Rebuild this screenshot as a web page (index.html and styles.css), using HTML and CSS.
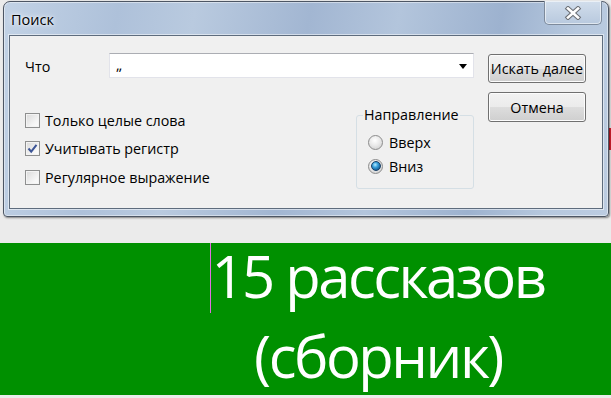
FILE: index.html
```html
<!DOCTYPE html>
<html lang="ru">
<head>
    <meta charset="UTF-8">
    <meta name="viewport" content="width=device-width, initial-scale=1.0">
    <title>Поиск</title>
    <link rel="stylesheet" href="styles.css">
</head>
<body>
    <div class="page">
        <div class="red-mark"></div>

        <div class="window">
            <div class="titlebar">
                <span class="title">Поиск</span>
                <div class="close">
                    <svg width="18" height="14" viewBox="0 0 18 14">
                        <path d="M4 2.5 L14 11.5 M14 2.5 L4 11.5" stroke="#6b6f75" stroke-width="4.6" stroke-linecap="square"/>
                        <path d="M4 2.5 L14 11.5 M14 2.5 L4 11.5" stroke="#ffffff" stroke-width="2.6" stroke-linecap="square"/>
                    </svg>
                </div>
            </div>

            <div class="client">
                <div class="main">
                    <div class="find-row">
                        <span class="find-label">Что</span>
                        <div class="combo">
                            <span class="combo-text">„</span>
                            <span class="combo-arrow"></span>
                        </div>
                    </div>

                    <div class="options">
                        <div class="checks">
                            <div class="check"><span class="box"></span>Только целые слова</div>
                            <div class="check"><span class="box checked">
                                <svg width="13" height="13" viewBox="0 0 13 13"><path d="M2.5 6.5 L5.2 9.6 L10.5 2.8" fill="none" stroke="#3d5596" stroke-width="2"/></svg>
                            </span>Учитывать регистр</div>
                            <div class="check"><span class="box"></span>Регулярное выражение</div>
                        </div>

                        <fieldset class="direction">
                            <legend>Направление</legend>
                            <div class="radios">
                                <div class="radio"><span class="dot"></span>Вверх</div>
                                <div class="radio"><span class="dot selected"></span>Вниз</div>
                            </div>
                        </fieldset>
                    </div>
                </div>

                <div class="buttons">
                    <div class="btn">Искать далее</div>
                    <div class="btn">Отмена</div>
                </div>
            </div>
        </div>

        <div class="banner">
            <div class="caret"></div>
            <div class="banner-text">15 рассказов<br>(сборник)</div>
        </div>
    </div>
</body>
</html>
```

FILE: styles.css
```css
* {
    box-sizing: border-box;
    margin: 0;
    padding: 0;
}

body {
    background-color: #ebebeb;
    font-family: 'Open Sans', 'Noto Sans', sans-serif;
    font-size: 14.3px;
    color: #000;
    overflow: hidden;
}

.page {
    position: relative;
    width: 611px;
    height: 398px;
    padding-top: 1px;
}

.red-mark {
    position: absolute;
    left: 606px;
    top: 128px;
    width: 5px;
    height: 22px;
    background-color: #d4202e;
}

/* window frame */
.window {
    position: relative;
    width: 606px;
    height: 216px;
    margin-left: 3px;
    padding: 0 5px 7px 5px;
    border: 1px solid #4d5664;
    border-radius: 7px 7px 4px 4px;
    background: linear-gradient(100deg, #c2d2e5 0%, #aec1da 18%, #b9cadf 30%, #a2b6d2 48%, #b3c5dc 62%, #9db2cf 78%, #b6c8de 90%, #bccce1 100%);
    box-shadow: 1px 1px 2px rgba(0, 0, 0, 0.45), inset 0 0 0 1px rgba(255, 255, 255, 0.45);
}

.titlebar {
    display: flex;
    justify-content: space-between;
    align-items: flex-start;
    height: 33px;
    margin: 0 -5px;
}

.title {
    padding: 9px 0 0 7px;
    line-height: 18px;
    font-size: 14.5px;
    text-shadow: 0 0 6px rgba(255, 255, 255, 0.95), 0 0 3px rgba(255, 255, 255, 0.9);
}

.close {
    display: flex;
    align-items: center;
    justify-content: center;
    width: 58px;
    height: 24px;
    margin: -1px 6px 0 0;
    border: 1px solid #7d8a9b;
    border-top: none;
    border-radius: 0 0 5px 5px;
    background: linear-gradient(#d2deec, #b8c9de);
    box-shadow: inset 0 0 0 1px rgba(255, 255, 255, 0.55);
}

/* dialog area */
.client {
    display: flex;
    height: 174px;
    padding: 17px 0 0 15px;
    border: 1px solid #5e6c7d;
    background-color: #f0f0f0;
    box-shadow: 0 0 0 1px rgba(255, 255, 255, 0.5);
}

.main {
    width: 449px;
}

.find-row {
    display: flex;
    align-items: center;
    height: 25px;
}

.find-label {
    width: 84px;
    padding-top: 2px;
}

.combo {
    position: relative;
    width: 365px;
    height: 25px;
    border: 1px solid #e2e3ea;
    border-top-color: #abadb3;
    background-color: #fff;
}

.combo-text {
    position: absolute;
    left: 6px;
    top: -2px;
    font-size: 15px;
    line-height: 24px;
}

.combo-arrow {
    position: absolute;
    right: 6px;
    top: 10px;
    border-left: 4px solid transparent;
    border-right: 4px solid transparent;
    border-top: 5px solid #000;
}

.options {
    display: flex;
    margin-top: 28px;
}

.checks {
    width: 331px;
}

.check {
    display: flex;
    align-items: center;
    height: 28.5px;
}

.box {
    display: flex;
    align-items: center;
    justify-content: center;
    width: 15px;
    height: 15px;
    margin-right: 5px;
    border: 1px solid #8e8f8f;
    background: linear-gradient(135deg, #d9d9d9, #f6f6f6 70%, #fbfbfb);
    box-shadow: inset 0 0 0 1px #f3f3f3;
}

.direction {
    width: 118px;
    height: 82px;
    margin-top: 1px;
    padding: 0;
    border: 1px solid #d5dfe5;
    border-radius: 3px;
}

.direction legend {
    margin-left: 6px;
    padding: 0 1px;
    line-height: 16px;
}

.radios {
    padding: 7px 0 0 11px;
}

.radio {
    display: flex;
    align-items: center;
    height: 24px;
}

.dot {
    display: flex;
    align-items: center;
    justify-content: center;
    width: 15px;
    height: 15px;
    margin-right: 6px;
    border: 1px solid #8c8c8c;
    border-radius: 50%;
    background: radial-gradient(circle at 45% 35%, #ffffff 0%, #eaeaea 45%, #c9c9c9 100%);
}

.dot.selected::after {
    content: "";
    width: 8px;
    height: 8px;
    border-radius: 50%;
    border: 1px solid #173f66;
    background: radial-gradient(circle at 40% 35%, #b8ecff 0%, #3aa3de 35%, #12588f 80%, #0c3a66 100%);
}

.buttons {
    display: flex;
    flex-direction: column;
    gap: 9px;
    width: 98px;
    margin-left: 14px;
    padding-top: 1px;
}

.btn {
    display: flex;
    align-items: center;
    justify-content: center;
    height: 29px;
    border: 1px solid #707070;
    border-radius: 3px;
    background: linear-gradient(#f2f2f2 0%, #ebebeb 50%, #dddddd 51%, #cfcfcf 100%);
    box-shadow: inset 0 0 0 1px #fcfcfc;
    white-space: nowrap;
}

.btn + .btn {
    height: 30px;
}

/* title under the dialog */
.banner {
    position: relative;
    display: flow-root;
    height: 152px;
    margin-top: 26px;
    background-color: #009000;
}

.caret {
    position: absolute;
    left: 210px;
    top: 0;
    width: 1px;
    height: 70px;
    background-color: #e070e0;
}

.banner-text {
    margin-top: -7px;
    padding-left: 145px;
    text-align: center;
    color: #fff;
    font-size: 58px;
    line-height: 80px;
    letter-spacing: -2.5px;
}
```
